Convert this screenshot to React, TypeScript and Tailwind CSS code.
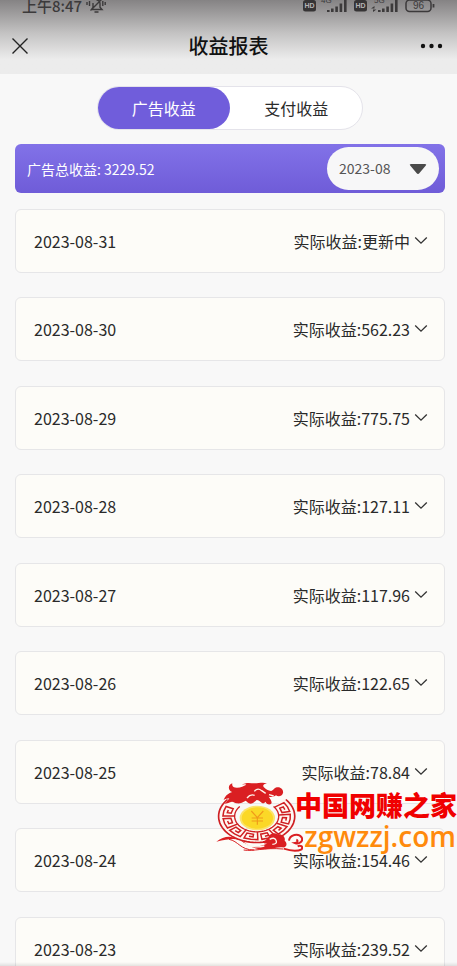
import React, { useState } from 'react';
import clsx from 'clsx';

interface DayIncome {
  date: string;
  income: string;
}

const days: DayIncome[] = [
  { date: '2023-08-31', income: '更新中' },
  { date: '2023-08-30', income: '562.23' },
  { date: '2023-08-29', income: '775.75' },
  { date: '2023-08-28', income: '127.11' },
  { date: '2023-08-27', income: '117.96' },
  { date: '2023-08-26', income: '122.65' },
  { date: '2023-08-25', income: '78.84' },
  { date: '2023-08-24', income: '154.46' },
  { date: '2023-08-23', income: '239.52' },
];

const tabs = ['广告收益', '支付收益'];

export default function App() {
  return (
    <div className="relative h-screen overflow-hidden bg-[#f8f8f8] font-['Noto_Sans_CJK_SC',sans-serif] text-[#2a2a2a]">
      <Header />
      <main className="pt-3 pr-3 pl-[15px]">
        <IncomeTabs />
        <TotalBanner />
        <DayList />
      </main>
      <div className="absolute inset-x-0 bottom-0 h-1 bg-linear-to-b from-transparent to-black/10" />
      <Watermark />
    </div>
  );
}

function Header() {
  return (
    <header className="bg-linear-to-b from-[#858384] via-[#c4c3c3] via-45% to-[#ececec] to-80%">
      <StatusBar />
      <div className="mt-[6px] grid h-14 grid-cols-[1fr_auto_1fr] items-center px-3">
        <button type="button" aria-label="关闭" className="justify-self-start">
          <svg viewBox="0 0 16 16" className="size-4" fill="none" stroke="#222" strokeWidth="1.4">
            <path d="M.5.5l15 15M15.5.5l-15 15" />
          </svg>
        </button>
        <h1 className="text-xl font-medium text-[#111]">收益报表</h1>
        <button type="button" aria-label="更多" className="justify-self-end">
          <svg viewBox="0 0 26 6" className="h-[6px] w-[26px]" fill="#111">
            <circle cx="4" cy="3" r="2.200" />
            <circle cx="12.500" cy="3" r="2.200" />
            <circle cx="21" cy="3" r="2.200" />
          </svg>
        </button>
      </div>
    </header>
  );
}

function StatusBar() {
  return (
    <div className="flex h-3 items-center justify-between px-[22px] text-[15px] leading-3 font-medium text-[#3c3a3b]">
      <div className="flex items-center gap-1">
        <span>上午8:47</span>
        <MutedBell />
      </div>
      <div className="flex items-center gap-[6px]">
        <HdBadge />
        <Signal label="4G" />
        <HdBadge />
        <Signal label="5G" arrows />
        <Battery />
      </div>
    </div>
  );
}

function MutedBell() {
  return (
    <svg viewBox="0 0 20 16" className="h-4 w-5" fill="none" stroke="#3c3a3b" strokeWidth="1.4">
      <path d="M6 11.500h10l-2-2.200V5.500c0-2-1.500-3.500-3.500-3.500M7 5v4.500l-1.500 2M8.500 14h4M16 1L4.500 12.500" />
      <path d="M3.500 3v5M1 4v3M16.800 3v5M19.200 4v3" />
    </svg>
  );
}

function HdBadge() {
  return (
    <svg viewBox="0 0 13 12" className="h-3 w-[13px]">
      <rect width="13" height="11.5" rx="2.5" fill="#363435" />
      <text
        x="6.5"
        y="8.4"
        textAnchor="middle"
        fontSize="7"
        fontWeight="700"
        fontFamily="Liberation Sans, sans-serif"
        fill="#b5b3b4"
      >
        HD
      </text>
    </svg>
  );
}

function Signal({ label, arrows }: { label: string; arrows?: boolean }) {
  return (
    <svg viewBox="0 0 26 14" className="h-[14px] w-[26px] overflow-visible" fill="#3c3a3b">
      <text x={arrows ? 1 : -1} y="4" fontSize="8" fontFamily="Liberation Sans, sans-serif">
        {label}
      </text>
      {arrows && <path d="M-2 9.500h3.500V7zM0 10.500h3.500L0 13z" />}
      <path d="M5 11h2.600v2H5zM9 9.500h2.600V13H9zM13.300 7.500h2.600V13h-2.600zM17.600 4.500h2.600V13h-2.600zM22 1h2.600v12H22z" />
    </svg>
  );
}

function Battery() {
  return (
    <svg viewBox="0 0 30 14" className="h-[14px] w-[30px]" fill="none" stroke="#3c3a3b">
      <rect x="1" y="1" width="25" height="11.500" rx="3.500" strokeWidth="1.500" />
      <path d="M28.500 5v3.500" strokeWidth="1.800" />
      <text
        x="13.500"
        y="10.300"
        textAnchor="middle"
        fontSize="10"
        fontFamily="Liberation Sans, sans-serif"
        fill="#3c3a3b"
        stroke="none"
      >
        96
      </text>
    </svg>
  );
}

function IncomeTabs() {
  const [active, setActive] = useState(0);

  return (
    <div className="mx-auto flex w-[62%] rounded-full border border-[#e4e3ea] bg-white">
      {tabs.map((tab, i) => (
        <button
          key={tab}
          type="button"
          onClick={() => setActive(i)}
          className={clsx(
            'h-[42px] flex-1 rounded-full pb-px text-base',
            i === active && 'bg-[#705ddb] text-white'
          )}
        >
          {tab}
        </button>
      ))}
    </div>
  );
}

function TotalBanner() {
  return (
    <section className="mt-[14px] flex items-center justify-between rounded-md bg-linear-to-b from-[#8272e8] to-[#6f5cd8] py-[3px] pr-[6px] pl-3 text-white">
      <p className="text-sm">广告总收益: 3229.52</p>
      <div className="relative">
        <select
          aria-label="月份"
          defaultValue="2023-08"
          className="h-[43px] w-28 appearance-none rounded-full bg-[#f7f7f8] pb-px pl-3 text-sm text-[#555]"
        >
          <option>2023-08</option>
          <option>2023-07</option>
        </select>
        <svg
          viewBox="0 0 18 12"
          className="pointer-events-none absolute top-4 right-3 h-3 w-[18px]"
          fill="#4a4a4a"
        >
          <path d="M2 1h14q2 0 .8 1.500L10.500 10q-1.500 1.800-3 0L1.200 2.500Q0 1 2 1z" />
        </svg>
      </div>
    </section>
  );
}

function DayList() {
  return (
    <ul className="mt-4">
      {days.map((day) => (
        <li key={day.date} className="mb-6 even:mb-[25px]">
          <button
            type="button"
            className="flex h-16 w-full items-center justify-between rounded-md border border-[#e6e6e8] bg-[#fdfcf8] pr-4 pl-[18px] text-base"
          >
            <span>{day.date}</span>
            <span className="flex items-center gap-1">
              实际收益:{day.income}
              <svg viewBox="0 0 14 14" className="size-[14px]" fill="none" stroke="#333" strokeWidth="1.300">
                <path d="M1.200 3.500L7 9.200l5.800-5.700" />
              </svg>
            </span>
          </button>
        </li>
      ))}
    </ul>
  );
}

// maps an angle (degrees) and a depth (0 inner .. 1 outer) onto the oval ring
function ringPoint(angle: number, depth: number) {
  const a = (angle * Math.PI) / 180;
  const x = 143 + Math.cos(a) * (67 + depth * 45);
  const y = 139 + Math.sin(a) * (47 + depth * 30);
  return `${x.toFixed(1)} ${y.toFixed(1)}`;
}

// part of an oval running along the ring from the upper right to the upper left
function ringArc(depth: number) {
  return 'M' + Array.from({ length: 53 }, (_, i) => ringPoint(-40 + i * 5, depth)).join('L');
}

// one square spiral of the key pattern
function keyPath(start: number) {
  const steps = [
    [0, 0], [0, 0.76], [12, 0.76], [24, 0.76], [24, 0.24], [9, 0.24], [9, 0.5], [17, 0.5],
  ];
  return 'M' + steps.map(([t, d]) => ringPoint(start + t, d)).join('L');
}

function Watermark() {
  return (
    <div className="pointer-events-none absolute top-[782px] right-0 flex items-start">
      <DragonLogo />
      <div className="-ml-2 text-right">
        <p className="text-[27px] leading-[46px] font-black text-[#f00000]">中国网赚之家</p>
        <p className="pr-px font-['Open_Sans',sans-serif] text-[28px] leading-4 font-semibold text-[#ff8a0c]">
          zgwzzj.com
        </p>
      </div>
    </div>
  );
}

function DragonLogo() {
  const keys = [-36, -5, 26, 57, 88, 119, 150, 181];

  return (
    <svg viewBox="12 36 270 210" className="h-[70px] w-[90px]" fill="none">
      <path d={ringArc(0.5)} stroke="#fff8f2" strokeWidth="38" />
      <path d={ringArc(1.05)} stroke="#cf1f22" strokeWidth="5" />
      <path d={ringArc(-0.02)} stroke="#cf1f22" strokeWidth="4" />
      {keys.map((k) => (
        <path key={k} d={keyPath(k)} stroke="#cf1f22" strokeWidth="4.500" />
      ))}
      <ellipse cx="145" cy="144" rx="53" ry="37" fill="#fce36a" />
      <ellipse cx="145" cy="144" rx="47" ry="32" fill="#fbd827" />
      <path
        d="M127 123l18 20 18-20M145 143v21M128 144h34M128 153h34"
        stroke="#f09a1a"
        strokeWidth="3.500"
      />
      {/* dragon head */}
      <path
        d="M70 66c-14-4-14-22 0-26-2 10 4 13 14 13 12 0 20-6 28-9-5-2-9-2-14 1 12-9 28-5 38-5 14 0 25-4 38 0-9 2-14 6-10 11 6 7 14 11 22 12 7-1 9-9 18-11 12-2 20 8 18 17-3 10-14 12-21 7-6 4-14 6-22 4 6 8 12 18 7 22-7 4-14-1-17-7-3 4-6 6-10 4-5-4-10-9-16-9-6 5-9 11-18 11-8-1-11-6-15-9-9 5-18 10-27 8-6-1-9-5-14-5-8 1-14 6-23 6 9-6 11-11 15-16-7 2-12 1-17 5 3-11 13-20 26-24z"
        fill="#da1f22"
      />
      <path d="M136 64q10-12 22-2l12 8M114 84q10-13 23-8M180 74l14 4" stroke="#fff5ec" strokeWidth="4" />
      {/* tail and clouds */}
      <path
        d="M22 215c28-22 57-17 82 3 18 16 44 16 72 2-8 2-14-1-15-8 9 3 10-5 16-8 3-12 18-18 29-11 14-2 24 8 21 19 10 8 6 22-8 20-14-1-26 5-44 5-37 4-55-9-70-21-16-12-40-12-83-1z"
        fill="#da1f22"
      />
      <path
        d="M182 208q14-8 19 3t-11 12M104 220q28 16 62 8"
        stroke="#fff5ec"
        strokeWidth="4"
      />
      <path
        d="M240 212c2-18 28-24 38-10 6 12-8 22-20 17 8-1 10-8 4-10M224 236c18 6 40 9 54 2 5-9-4-13-12-9"
        stroke="#da1f22"
        strokeWidth="6"
      />
      <path d="M60 208c28 5 34 32 75 32M104 240c30 5 60-8 118-3" stroke="#da1f22" strokeWidth="3" />
    </svg>
  );
}
